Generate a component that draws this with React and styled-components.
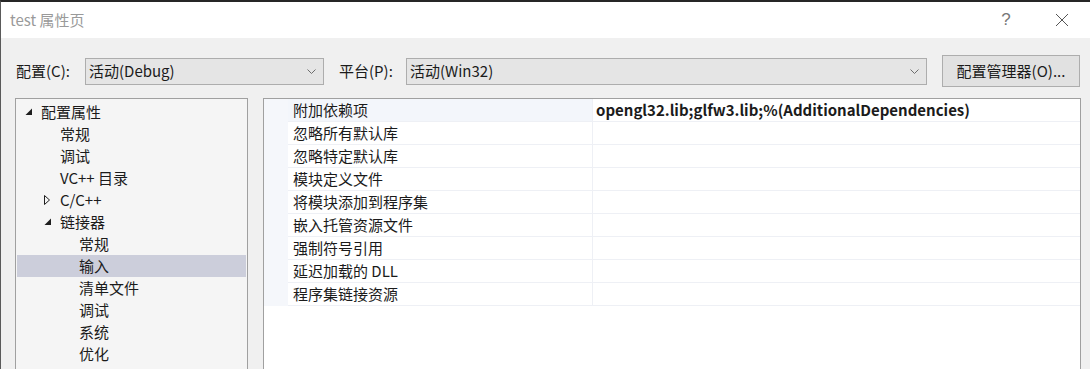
import React from "react";
import styled, { createGlobalStyle } from "styled-components";

const Global = createGlobalStyle`
  html, body { margin: 0; padding: 0; background: #f0f0f0; }
  body { font-family: "Noto Sans CJK SC", "Noto Sans", sans-serif; }
  * { box-sizing: border-box; }
`;

const Win = styled.div`
  width: 1090px;
  height: 369px;
  overflow: hidden;
  background: #f0f0f0;
  border-top: 2px solid #262626;
  border-left: 1px solid #5a5a5a;
  display: flex;
  flex-direction: column;
  color: #1b1b1b;
  font-size: 15px;
`;

const TitleBar = styled.div`
  height: 36px;
  flex: none;
  background: #ffffff;
  display: flex;
  align-items: center;
  padding-left: 9px;
`;

const Title = styled.div`
  flex: 1;
  color: #9a9a9a;
  font-size: 15px;
  line-height: 1;
  padding-bottom: 2px;
`;

const CapBtn = styled.div`
  width: 56px;
  height: 36px;
  display: flex;
  align-items: center;
  justify-content: center;
  color: #777;
  font-family: "Liberation Sans", sans-serif;
  font-size: 17px;
`;

const Body = styled.div`
  flex: 1;
  display: flex;
  flex-direction: column;
  padding: 17px 0 0 14px;
  gap: 11px;
  min-height: 0;
`;

const TopRow = styled.div`
  display: flex;
  align-items: center;
  height: 32px;
`;

const Label = styled.div`
  width: ${(p) => p.$w}px;
  line-height: 1;
  padding-left: 1px;
  padding-bottom: 2px;
`;

const Combo = styled.div`
  width: ${(p) => p.$w}px;
  height: 27px;
  background: #e5e5e5;
  border: 1px solid #adadad;
  display: flex;
  align-items: center;
  padding: 0 7px 0 3px;
  margin-right: ${(p) => p.$mr}px;
`;

const ComboText = styled.div`
  flex: 1;
  line-height: 1;
  padding-bottom: 2px;
`;

const Button = styled.div`
  width: 138px;
  height: 32px;
  background: #e1e1e1;
  border: 1px solid #adadad;
  display: flex;
  align-items: center;
  justify-content: center;
  line-height: 1;
  padding-bottom: 2px;
`;

const Panels = styled.div`
  flex: 1;
  display: flex;
  gap: 15px;
  min-height: 0;
`;

const Tree = styled.div`
  width: 233px;
  background: #f5f5f5;
  border: 1px solid #a0a0a0;
  border-bottom: none;
  padding: 2px 1px 0 1px;
`;

const TreeRow = styled.div`
  height: 22px;
  display: flex;
  align-items: center;
  padding-left: ${(p) => 8 + p.$level * 19}px;
  background: ${(p) => (p.$sel ? "#cccedb" : "transparent")};
`;

const Arrow = styled.span`
  width: 16px;
  flex: none;
  display: flex;
  align-items: center;
`;

const TreeText = styled.span`
  line-height: 1;
  padding-bottom: 2px;
  padding-left: ${(p) => (p.$noArrow ? 16 : 0)}px;
`;

const Grid = styled.div`
  width: 818px;
  background: #ffffff;
  border: 1px solid #a0a0a0;
  border-bottom: none;
  display: flex;
  flex-direction: column;
`;

const GridRow = styled.div`
  height: 23px;
  display: grid;
  grid-template-columns: 24px 305px 1fr;
`;

const Gutter = styled.div`
  background: #f5f7fb;
`;

const NameCell = styled.div`
  background: ${(p) => (p.$sel ? "#f3f6fb" : "#ffffff")};
  border-bottom: 1px solid #eef0f5;
  border-right: 1px solid #eef0f5;
  display: flex;
  align-items: center;
  padding-left: 5px;
  line-height: 1;
`;

const ValueCell = styled.div`
  border-bottom: 1px solid #eef0f5;
  display: flex;
  align-items: center;
  padding-left: 3px;
  font-weight: 700;
  line-height: 1;
`;

const Txt = styled.span`
  padding-bottom: 2px;
`;

const Chevron = () => (
  <svg width="9" height="5" viewBox="0 0 9 5">
    <polyline points="0.5,0.5 4.5,4.5 8.5,0.5" fill="none" stroke="#6d6d6d" strokeWidth="1" />
  </svg>
);

const Expanded = () => (
  <svg width="8" height="8" viewBox="0 0 8 8">
    <polygon points="7,0.5 7,7 0.5,7" fill="#1e1e1e" />
  </svg>
);

const Collapsed = () => (
  <svg width="8" height="10" viewBox="0 0 8 10">
    <polygon points="0.5,0.5 5.5,5 0.5,9.5" fill="none" stroke="#1e1e1e" strokeWidth="1" />
  </svg>
);

const CloseIcon = () => (
  <svg width="14" height="14" viewBox="0 0 14 14">
    <line x1="1" y1="1" x2="13" y2="13" stroke="#555" strokeWidth="1" />
    <line x1="13" y1="1" x2="1" y2="13" stroke="#555" strokeWidth="1" />
  </svg>
);

const tree = [
  { t: "配置属性", l: 0, a: "e" },
  { t: "常规", l: 1 },
  { t: "调试", l: 1 },
  { t: "VC++ 目录", l: 1 },
  { t: "C/C++", l: 1, a: "c" },
  { t: "链接器", l: 1, a: "e" },
  { t: "常规", l: 2 },
  { t: "输入", l: 2, sel: true },
  { t: "清单文件", l: 2 },
  { t: "调试", l: 2 },
  { t: "系统", l: 2 },
  { t: "优化", l: 2 },
];

const props = [
  ["附加依赖项", "opengl32.lib;glfw3.lib;%(AdditionalDependencies)"],
  ["忽略所有默认库", ""],
  ["忽略特定默认库", ""],
  ["模块定义文件", ""],
  ["将模块添加到程序集", ""],
  ["嵌入托管资源文件", ""],
  ["强制符号引用", ""],
  ["延迟加载的 DLL", ""],
  ["程序集链接资源", ""],
];

export default function App() {
  return (
    <>
      <Global />
      <Win>
        <TitleBar>
          <Title>test 属性页</Title>
          <CapBtn>?</CapBtn>
          <CapBtn>
            <CloseIcon />
          </CapBtn>
        </TitleBar>
        <Body>
          <TopRow>
            <Label $w={70}>配置(C):</Label>
            <Combo $w={239} $mr={14}>
              <ComboText>活动(Debug)</ComboText>
              <Chevron />
            </Combo>
            <Label $w={68}>平台(P):</Label>
            <Combo $w={521} $mr={15}>
              <ComboText>活动(Win32)</ComboText>
              <Chevron />
            </Combo>
            <Button>配置管理器(O)...</Button>
          </TopRow>
          <Panels>
            <Tree>
              {tree.map((n, i) => (
                <TreeRow key={i} $level={n.l} $sel={n.sel}>
                  {n.a && <Arrow>{n.a === "e" ? <Expanded /> : <Collapsed />}</Arrow>}
                  <TreeText $noArrow={!n.a}>{n.t}</TreeText>
                </TreeRow>
              ))}
            </Tree>
            <Grid>
              {props.map(([k, v], i) => (
                <GridRow key={i}>
                  <Gutter />
                  <NameCell $sel={i === 0}>
                    <Txt>{k}</Txt>
                  </NameCell>
                  <ValueCell>
                    <Txt>{v}</Txt>
                  </ValueCell>
                </GridRow>
              ))}
            </Grid>
          </Panels>
        </Body>
      </Win>
    </>
  );
}
